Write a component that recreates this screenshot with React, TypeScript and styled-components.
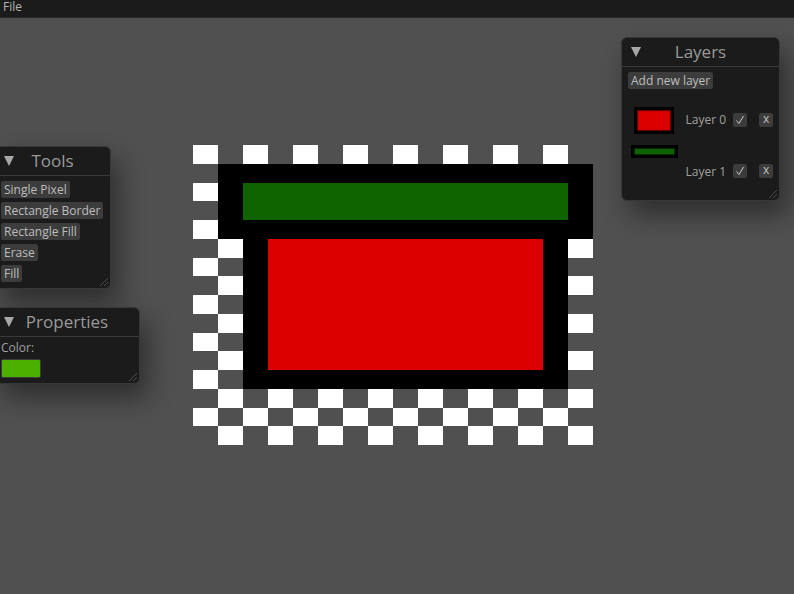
import React from "react";
import styled, { createGlobalStyle } from "styled-components";

const Global = createGlobalStyle`
  html, body { margin: 0; padding: 0; background: #505050; }
  body { font-family: "Open Sans", "DejaVu Sans", sans-serif; }
  * { box-sizing: border-box; }
`;

const Screen = styled.div`
  width: 794px;
  height: 594px;
  display: flex;
  flex-direction: column;
  background: #505050;
  overflow: hidden;
`;

const MenuBar = styled.div`
  height: 18px;
  flex: none;
  display: flex;
  align-items: flex-start;
  padding: 0 0 0 3px;
  background: #1b1b1b;
  border-bottom: 1px solid #2a2a2a;
`;

const MenuItem = styled.span`
  font-size: 12px;
  color: #b4b4b4;
  line-height: 13px;
`;

const Desktop = styled.div`
  position: relative;
  flex: 1;
`;

const Win = styled.div<{ $left: number; $top: number; $width: number }>`
  position: absolute;
  left: ${(p) => p.$left}px;
  top: ${(p) => p.$top}px;
  width: ${(p) => p.$width}px;
  background: #1b1b1b;
  border: 1px solid #383838;
  border-radius: 6px;
  box-shadow: 8px 14px 26px rgba(0, 0, 0, 0.42);
  display: flex;
  flex-direction: column;
`;

const TitleBar = styled.div`
  position: relative;
  height: 29px;
  display: flex;
  align-items: center;
  justify-content: center;
  border-bottom: 1px solid #3a3a3a;
`;

const Arrow = styled.span`
  position: absolute;
  left: 9px;
  top: 9px;
  width: 0;
  height: 0;
  border-left: 5px solid transparent;
  border-right: 5px solid transparent;
  border-top: 10px solid #a8a8a8;
`;

const TitleText = styled.span`
  font-size: 17px;
  color: #9a9a9a;
  line-height: 1;
  margin-top: -1px;
`;

const Body = styled.div<{ $pad: string }>`
  position: relative;
  padding: ${(p) => p.$pad};
  display: flex;
  flex-direction: column;
  align-items: flex-start;
`;

const ToolButtons = styled.div`
  display: flex;
  flex-direction: column;
  align-items: flex-start;
  gap: 4px;
`;

const Btn = styled.div`
  height: 17px;
  padding: 0 3px;
  display: flex;
  align-items: center;
  background: #3c3c3c;
  border-radius: 2px;
  font-size: 12px;
  color: #bcbcbc;
  white-space: nowrap;
  line-height: 1;
`;

const Label = styled.div`
  font-size: 12px;
  color: #a0a0a0;
  line-height: 1;
  white-space: nowrap;
`;

const Swatch = styled.div<{ $color: string }>`
  width: 40px;
  height: 19px;
  margin-top: 5px;
  background: ${(p) => p.$color};
  border: 1px solid #3c3c3c;
  border-radius: 2px;
`;

const Grip = styled.svg`
  position: absolute;
  right: 1px;
  bottom: 1px;
`;

const LayerList = styled.div`
  display: flex;
  flex-direction: column;
  margin-top: 16px;
  gap: 10px;
  width: 100%;
`;

const LayerRow = styled.div<{ $height: number; $align: string }>`
  height: ${(p) => p.$height}px;
  display: flex;
  align-items: ${(p) => p.$align};
`;

const ThumbCell = styled.div<{ $self: string }>`
  width: 53px;
  height: 100%;
  display: flex;
  justify-content: center;
  align-items: ${(p) => p.$self};
`;

const Thumb = styled.div<{ $w: number; $h: number; $inner: string; $bw: number }>`
  width: ${(p) => p.$w}px;
  height: ${(p) => p.$h}px;
  background: ${(p) => p.$inner};
  border: ${(p) => p.$bw}px solid #000;
  box-shadow: inset 0 0 1px 1px rgba(0, 0, 0, 0.6);
  filter: blur(0.4px);
`;

const LayerName = styled(Label)`
  margin-left: 5px;
  width: 48px;
`;

const SmallBtn = styled.div`
  width: 14px;
  height: 14px;
  margin-right: 12px;
  background: #3c3c3c;
  border-radius: 2px;
  display: flex;
  align-items: center;
  justify-content: center;
  font-size: 12px;
  color: #c0c0c0;
  line-height: 1;
  &:last-child { margin-right: 0; }
`;

const XGlyph = styled.span`
  margin-top: -2px;
`;

const Canvas = styled.svg`
  position: absolute;
  left: 193px;
  top: 127px;
`;

const ResizeGrip = () => (
  <Grip width="11" height="11" viewBox="0 0 11 11">
    <line x1="10" y1="2" x2="2" y2="10" stroke="#4a4a4a" strokeWidth="1" />
    <line x1="10" y1="6" x2="6" y2="10" stroke="#4a4a4a" strokeWidth="1" />
  </Grip>
);

const Check = () => (
  <svg width="14" height="14" viewBox="0 0 14 14">
    <polyline points="3.5,7.5 6,10.5 10.5,3" fill="none" stroke="#c8c8c8" strokeWidth="1" />
  </svg>
);

const cells: { x: number; y: number }[] = [];
for (let r = 0; r < 16; r++) {
  for (let c = 0; c < 16; c++) {
    if ((r + c) % 2 === 0) cells.push({ x: c, y: r });
  }
}

const PixelCanvas = () => (
  <Canvas width="400" height="300" viewBox="0 0 16 16" preserveAspectRatio="none" shapeRendering="crispEdges">
    {cells.map((c) => (
      <rect key={`${c.x}-${c.y}`} x={c.x} y={c.y} width="1" height="1" fill="#ffffff" />
    ))}
    <rect x="2" y="4" width="13" height="9" fill="#000" />
    <rect x="3" y="5" width="11" height="7" fill="#dd0000" />
    <rect x="1" y="1" width="15" height="4" fill="#000" />
    <rect x="2" y="2" width="13" height="2" fill="#0f6400" />
  </Canvas>
);

export default function App() {
  return (
    <Screen>
      <Global />
      <MenuBar>
        <MenuItem>File</MenuItem>
      </MenuBar>
      <Desktop>
        <PixelCanvas />

        <Win $left={-6} $top={128} $width={117}>
          <TitleBar>
            <Arrow />
            <TitleText>Tools</TitleText>
          </TitleBar>
          <Body $pad="5px 6px 6px 6px">
            <ToolButtons>
              <Btn>Single Pixel</Btn>
              <Btn>Rectangle Border</Btn>
              <Btn>Rectangle Fill</Btn>
              <Btn>Erase</Btn>
              <Btn>Fill</Btn>
            </ToolButtons>
            <ResizeGrip />
          </Body>
        </Win>

        <Win $left={-6} $top={289} $width={146}>
          <TitleBar>
            <Arrow />
            <TitleText>Properties</TitleText>
          </TitleBar>
          <Body $pad="5px 6px 5px 6px">
            <Label>Color:</Label>
            <Swatch $color="#4cb000" />
            <ResizeGrip />
          </Body>
        </Win>

        <Win $left={621} $top={19} $width={159}>
          <TitleBar>
            <Arrow />
            <TitleText>Layers</TitleText>
          </TitleBar>
          <Body $pad="5px 6px 22px 6px">
            <Btn>Add new layer</Btn>
            <LayerList>
              <LayerRow $height={30} $align="center">
                <ThumbCell $self="center">
                  <Thumb $w={40} $h={27} $inner="#dd0000" $bw={3} />
                </ThumbCell>
                <LayerName>Layer 0</LayerName>
                <SmallBtn><Check /></SmallBtn>
                <SmallBtn><XGlyph>x</XGlyph></SmallBtn>
              </LayerRow>
              <LayerRow $height={33} $align="flex-end">
                <ThumbCell $self="flex-start">
                  <Thumb $w={47} $h={13} $inner="#0f6400" $bw={3} />
                </ThumbCell>
                <LayerName>Layer 1</LayerName>
                <SmallBtn><Check /></SmallBtn>
                <SmallBtn><XGlyph>x</XGlyph></SmallBtn>
              </LayerRow>
            </LayerList>
            <ResizeGrip />
          </Body>
        </Win>
      </Desktop>
    </Screen>
  );
}
